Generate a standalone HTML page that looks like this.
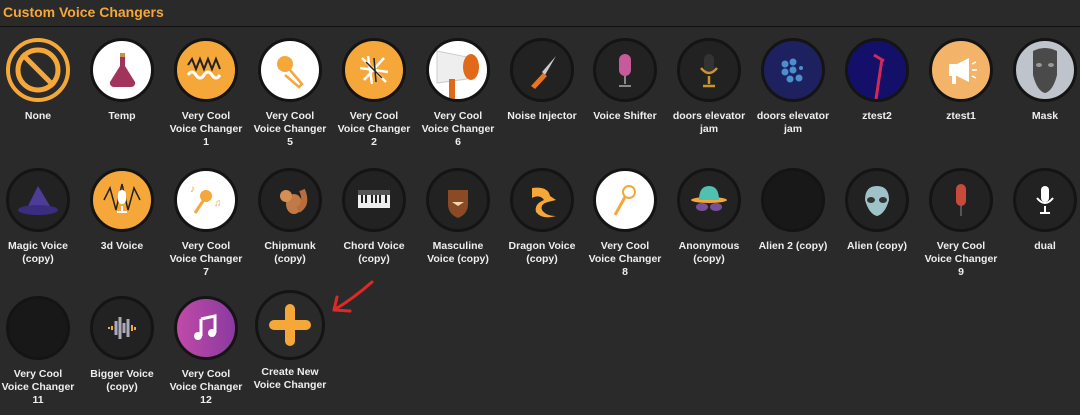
<!DOCTYPE html>
<html><head><meta charset="utf-8"><style>
body{margin:0;width:1080px;height:415px;background:#2a2a2a;overflow:hidden;font-family:"Liberation Sans",sans-serif;position:relative}
.h{position:absolute;left:3px;top:4px;color:#f5a73a;font-weight:bold;font-size:14px}
.line{position:absolute;left:0;top:26px;width:1080px;height:1px;background:#111}
.c{position:absolute;width:84px;text-align:center}
.o{width:58px;height:58px;border-radius:50%;border:3px solid #141414;margin:0 auto;background:#222;position:relative;overflow:hidden;display:flex;align-items:center;justify-content:center}
.t{color:#eee;font-weight:bold;font-size:10.5px;line-height:13px;margin-top:8px}
.w{background:#fff}.or{background:#f5a73a}
</style></head><body>
<div class="h">Custom Voice Changers</div><div class="line"></div>

<!-- row 1 -->
<div class="c" style="left:-4px;top:38px"><div class="o" style="border:4px solid #f5a73a;background:#2a2a2a;width:56px;height:56px"><svg width="56" height="56"><line x1="12" y1="12" x2="44" y2="44" stroke="#f5a73a" stroke-width="5"/><circle cx="28" cy="28" r="20" fill="none" stroke="#f5a73a" stroke-width="5"/></svg></div><div class="t">None</div></div>
<div class="c" style="left:80px;top:38px"><div class="o w"><svg width="40" height="40"><path d="M18 6h5v10l10 16a4 4 0 0 1-4 5H12a4 4 0 0 1-4-5l10-16z" fill="#a0345a"/><rect x="18" y="3" width="5" height="4" fill="#c8914a"/></svg></div><div class="t">Temp</div></div>
<div class="c" style="left:164px;top:38px"><div class="o or"><svg width="40" height="30"><path d="M2 10l4-6 4 10 4-10 4 10 4-10 4 10 4-10 4 10" stroke="#222" stroke-width="2" fill="none"/><path d="M2 20q4-6 8 0t8 0 8 0 8 0" stroke="#fff" stroke-width="3" fill="none"/></svg></div><div class="t">Very Cool<br>Voice Changer<br>1</div></div>
<div class="c" style="left:248px;top:38px"><div class="o w"><svg width="40" height="40"><circle cx="15" cy="14" r="8" fill="#f5a73a"/><path d="M20 20l12 14-3 3-14-12" fill="none" stroke="#f5a73a" stroke-width="2.5"/></svg></div><div class="t">Very Cool<br>Voice Changer<br>5</div></div>
<div class="c" style="left:332px;top:38px"><div class="o or"><svg width="40" height="40"><path d="M8 8l24 24M10 30l20-22M14 6l4 28M6 18l28 4" stroke="#fff" stroke-width="2.5"/><path d="M12 12l16 16M20 8l2 24" stroke="#222" stroke-width="1.5"/></svg></div><div class="t">Very Cool<br>Voice Changer<br>2</div></div>
<div class="c" style="left:416px;top:38px"><div class="o w"><svg width="58" height="58"><path d="M8 10l30 6v22l-30 4z" fill="#eee" stroke="#ccc"/><ellipse cx="42" cy="26" rx="8" ry="13" fill="#e06a1a"/><rect x="20" y="38" width="6" height="20" fill="#e06a1a"/></svg></div><div class="t">Very Cool<br>Voice Changer<br>6</div></div>
<div class="c" style="left:500px;top:38px"><div class="o"><svg width="40" height="40"><path d="M34 6l-14 16 3 3z" fill="#ccc"/><path d="M21 23l-12 13 4 3 12-13z" fill="#e87722"/></svg></div><div class="t">Noise Injector</div></div>
<div class="c" style="left:583px;top:38px"><div class="o"><svg width="40" height="40"><rect x="14" y="4" width="12" height="22" rx="6" fill="#c65a9a"/><path d="M20 26v8M14 36h12" stroke="#888" stroke-width="2"/></svg></div><div class="t">Voice Shifter</div></div>
<div class="c" style="left:667px;top:38px"><div class="o"><svg width="40" height="40"><rect x="15" y="4" width="10" height="18" rx="5" fill="#333"/><path d="M12 18q8 10 16 0M20 26v8M14 36h12" stroke="#c9952c" stroke-width="2.5" fill="none"/></svg></div><div class="t">doors elevator<br>jam</div></div>
<div class="c" style="left:751px;top:38px"><div class="o" style="background:#1e2160"><svg width="40" height="40" fill="#4a90d0"><circle cx="12" cy="14" r="3.5"/><circle cx="20" cy="12" r="3.5"/><circle cx="20" cy="20" r="3.5"/><circle cx="12" cy="22" r="3.5"/><circle cx="17" cy="29" r="3.5"/><circle cx="26" cy="28" r="3.5"/><circle cx="28" cy="18" r="2"/></svg></div><div class="t">doors elevator<br>jam</div></div>
<div class="c" style="left:835px;top:38px"><div class="o" style="background:#14106a"><svg width="58" height="58"><path d="M26 14l10 6M34 18l-6 40" stroke="#d02a5a" stroke-width="3"/></svg></div><div class="t">ztest2</div></div>
<div class="c" style="left:919px;top:38px"><div class="o" style="background:#f3b46a"><svg width="40" height="40" fill="#fff"><path d="M8 14h8l12-6v24l-12-6h-8z"/><rect x="11" y="24" width="4" height="10"/><path d="M31 14l4-2M31 20h5M31 26l4 2" stroke="#fff" stroke-width="1.5"/></svg></div><div class="t">ztest1</div></div>
<div class="c" style="left:1003px;top:38px"><div class="o" style="background:#bfc3cc"><svg width="40" height="50"><path d="M8 6q12-6 24 0v24q-4 16-12 18q-8-2-12-18z" fill="#4a4a4a"/><ellipse cx="14" cy="20" rx="3" ry="2" fill="#999"/><ellipse cx="26" cy="20" rx="3" ry="2" fill="#999"/></svg></div><div class="t">Mask</div></div>

<!-- row 2 -->
<div class="c" style="left:-4px;top:168px"><div class="o"><svg width="44" height="40"><path d="M10 30l12-24 12 20z" fill="#4d3d99"/><ellipse cx="22" cy="30" rx="20" ry="5" fill="#3a2d80"/></svg></div><div class="t">Magic Voice<br>(copy)</div></div>
<div class="c" style="left:80px;top:168px"><div class="o or"><svg width="40" height="40"><path d="M2 20l6-12 6 22 6-26 6 26 6-22 6 12" stroke="#222" stroke-width="1.5" fill="none"/><rect x="16" y="10" width="8" height="14" rx="4" fill="#fff"/><path d="M20 26v6M15 32h10" stroke="#fff" stroke-width="2"/></svg></div><div class="t">3d Voice</div></div>
<div class="c" style="left:164px;top:168px"><div class="o w"><svg width="40" height="40"><circle cx="20" cy="16" r="6" fill="#f5a73a"/><path d="M17 21l-8 12" stroke="#f5a73a" stroke-width="3"/><text x="4" y="12" fill="#f5a73a" font-size="10">♪</text><text x="28" y="26" fill="#f5a73a" font-size="10">♫</text></svg></div><div class="t">Very Cool<br>Voice Changer<br>7</div></div>
<div class="c" style="left:248px;top:168px"><div class="o"><svg width="40" height="40"><ellipse cx="24" cy="24" rx="8" ry="10" fill="#c07a45"/><circle cx="16" cy="16" r="6" fill="#d58f55"/><path d="M28 30q10-6 4-20" stroke="#b86d3a" stroke-width="6" fill="none"/></svg></div><div class="t">Chipmunk<br>(copy)</div></div>
<div class="c" style="left:332px;top:168px"><div class="o"><svg width="40" height="40"><rect x="4" y="12" width="32" height="16" fill="#eee"/><rect x="4" y="10" width="32" height="5" fill="#555"/><path d="M8 15v8M12 15v8M18 15v8M22 15v8M26 15v8M32 15v8" stroke="#222" stroke-width="2"/></svg></div><div class="t">Chord Voice<br>(copy)</div></div>
<div class="c" style="left:416px;top:168px"><div class="o"><svg width="40" height="40"><path d="M10 10h20v14q0 10-10 14q-10-4-10-14z" fill="#8a4a26"/><path d="M14 22h12l-6 4z" fill="#f4d6b0"/></svg></div><div class="t">Masculine<br>Voice (copy)</div></div>
<div class="c" style="left:500px;top:168px"><div class="o"><svg width="40" height="40"><path d="M10 8q16-2 18 8l6 4-8 2q-8 2-6 8 4 6 14 6-14 4-20-4-2-8 8-12-4-6-12-2z" fill="#f5a73a"/></svg></div><div class="t">Dragon Voice<br>(copy)</div></div>
<div class="c" style="left:583px;top:168px"><div class="o w"><svg width="40" height="40"><circle cx="24" cy="12" r="6" fill="none" stroke="#f5a73a" stroke-width="2"/><path d="M20 17l-10 18" stroke="#f5a73a" stroke-width="3"/></svg></div><div class="t">Very Cool<br>Voice Changer<br>8</div></div>
<div class="c" style="left:667px;top:168px"><div class="o"><svg width="44" height="40"><ellipse cx="22" cy="20" rx="18" ry="3" fill="#f5a73a"/><path d="M12 20q0-14 10-14t10 14z" fill="#50c0b0"/><ellipse cx="15" cy="27" rx="6" ry="4" fill="#7a4f9a"/><ellipse cx="29" cy="27" rx="6" ry="4" fill="#7a4f9a"/></svg></div><div class="t">Anonymous<br>(copy)</div></div>
<div class="c" style="left:751px;top:168px"><div class="o" style="background:#181818"></div><div class="t">Alien 2 (copy)</div></div>
<div class="c" style="left:835px;top:168px"><div class="o"><svg width="40" height="40"><path d="M20 6q12 0 12 14q-4 14-12 16q-8-2-12-16q0-14 12-14z" fill="#9fc2c8"/><ellipse cx="14" cy="20" rx="4" ry="3" fill="#333"/><ellipse cx="26" cy="20" rx="4" ry="3" fill="#333"/></svg></div><div class="t">Alien (copy)</div></div>
<div class="c" style="left:919px;top:168px"><div class="o"><svg width="40" height="40"><rect x="15" y="4" width="10" height="22" rx="5" fill="#c84a3a"/><path d="M20 26v10" stroke="#555" stroke-width="2"/></svg></div><div class="t">Very Cool<br>Voice Changer<br>9</div></div>
<div class="c" style="left:1003px;top:168px"><div class="o"><svg width="40" height="40"><rect x="16" y="6" width="8" height="16" rx="4" fill="#fff"/><path d="M12 18q8 10 16 0M20 26v6M15 33h10" stroke="#fff" stroke-width="2" fill="none"/></svg></div><div class="t">dual</div></div>

<!-- row 3 -->
<div class="c" style="left:-4px;top:296px"><div class="o" style="background:#181818"></div><div class="t">Very Cool<br>Voice Changer<br>11</div></div>
<div class="c" style="left:80px;top:296px"><div class="o"><svg width="40" height="30"><path d="M6 15h2M10 13v4M30 12v6M33 14v3" stroke="#f5a73a" stroke-width="2"/><path d="M14 8v14M18 4v22M22 10v10M26 6v18" stroke="#aab" stroke-width="3"/></svg></div><div class="t">Bigger Voice<br>(copy)</div></div>
<div class="c" style="left:164px;top:296px"><div class="o" style="background:linear-gradient(90deg,#c04aa8,#8a3aa0)"><svg width="30" height="30"><path d="M10 6l14-3v17" stroke="#fff" stroke-width="3" fill="none"/><path d="M10 6v17" stroke="#fff" stroke-width="3"/><circle cx="7" cy="23" r="4" fill="#fff"/><circle cx="21" cy="20" r="4" fill="#fff"/></svg></div><div class="t">Very Cool<br>Voice Changer<br>12</div></div>
<div class="c" style="left:248px;top:290px"><div class="o" style="width:64px;height:64px;background:#2a2a2a"><svg width="44" height="44"><path d="M22 6v32M6 22h32" stroke="#f5a73a" stroke-width="10" stroke-linecap="round"/></svg></div><div class="t" style="margin-top:6px">Create New<br>Voice Changer</div></div>

<svg style="position:absolute;left:328px;top:278px" width="50" height="40"><path d="M44 4q-18 16-38 28M6 32l3-13M6 32l16 1" stroke="#e02828" stroke-width="3" fill="none" stroke-linecap="round"/></svg>
</body></html>
